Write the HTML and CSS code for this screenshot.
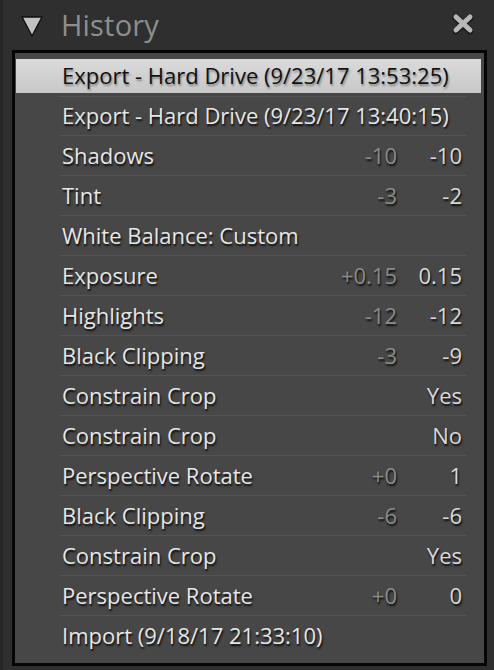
FILE: index.html
```html
<!DOCTYPE html>
<html>
<head>
<meta charset="utf-8">
<link rel="stylesheet" href="styles.css">
</head>
<body>
<div class="panel">
  <div class="header">
    <svg class="tri" width="24" height="24" viewBox="0 0 24 24"><polygon points="2,3 22,3 12,22" fill="#c2c2c2" stroke="#111" stroke-width="1.5" stroke-linejoin="round"/></svg>
    <span class="title">History</span>
    <svg class="close" width="26" height="24" viewBox="0 0 26 24"><g stroke="#111" stroke-width="7" stroke-linecap="round" opacity="0.6"><line x1="6" y1="6" x2="20" y2="19"/><line x1="20" y1="6" x2="6" y2="19"/></g><g stroke="#b8b8b8" stroke-width="5" stroke-linecap="round"><line x1="6" y1="5" x2="20" y2="18"/><line x1="20" y1="5" x2="6" y2="18"/></g></svg>
  </div>
  <div class="list">
    <div class="row selected"><div class="inner"><span class="name">Export - Hard Drive (9/23/17 13:53:25)</span></div></div>
    <div class="row"><div class="inner"><span class="name">Export - Hard Drive (9/23/17 13:40:15)</span></div></div>
    <div class="row"><div class="inner"><span class="name">Shadows</span><span class="v1">-10</span><span class="v2">-10</span></div></div>
    <div class="row"><div class="inner"><span class="name">Tint</span><span class="v1">-3</span><span class="v2">-2</span></div></div>
    <div class="row"><div class="inner"><span class="name">White Balance: Custom</span></div></div>
    <div class="row"><div class="inner"><span class="name">Exposure</span><span class="v1">+0.15</span><span class="v2">0.15</span></div></div>
    <div class="row"><div class="inner"><span class="name">Highlights</span><span class="v1">-12</span><span class="v2">-12</span></div></div>
    <div class="row"><div class="inner"><span class="name">Black Clipping</span><span class="v1">-3</span><span class="v2">-9</span></div></div>
    <div class="row"><div class="inner"><span class="name">Constrain Crop</span><span class="v1"></span><span class="v2">Yes</span></div></div>
    <div class="row"><div class="inner"><span class="name">Constrain Crop</span><span class="v1"></span><span class="v2">No</span></div></div>
    <div class="row"><div class="inner"><span class="name">Perspective Rotate</span><span class="v1">+0</span><span class="v2">1</span></div></div>
    <div class="row"><div class="inner"><span class="name">Black Clipping</span><span class="v1">-6</span><span class="v2">-6</span></div></div>
    <div class="row"><div class="inner"><span class="name">Constrain Crop</span><span class="v1"></span><span class="v2">Yes</span></div></div>
    <div class="row"><div class="inner"><span class="name">Perspective Rotate</span><span class="v1">+0</span><span class="v2">0</span></div></div>
    <div class="row last"><div class="inner"><span class="name">Import (9/18/17 21:33:10)</span></div></div>
  </div>
</div>
</body>
</html>
```
FILE: styles.css
```css
html, body {
  margin: 0;
  padding: 0;
  background: #2f2f2f;
}
body {
  width: 494px;
  height: 670px;
  overflow: hidden;
  font-family: "Open Sans", "Liberation Sans", sans-serif;
}
.panel {
  border-left: 3px solid #262626;
  height: 670px;
  box-sizing: border-box;
  padding: 0 7px 0 9px;
}
.header {
  height: 50px;
  display: flex;
  align-items: center;
}
.tri {
  margin-left: 8px;
  margin-top: 2px;
}
.title {
  margin-left: 17px;
  font-size: 29px;
  color: #8e8e8e;
  letter-spacing: 0.2px;
  margin-top: -2px;
}
.close {
  margin-left: auto;
  margin-right: 11px;
  margin-top: -3px;
}
.list {
  border: 3px solid #050505;
  background: #474747;
  height: 616px;
  box-sizing: border-box;
  padding-top: 3px;
}
.row {
  height: 40px;
  box-sizing: border-box;
  padding-left: 45px;
  padding-right: 18px;
}
.inner {
  height: 40px;
  box-sizing: border-box;
  border-bottom: 1px solid #545454;
  display: flex;
  align-items: center;
  padding-left: 2px;
  padding-right: 4px;
  padding-bottom: 2px;
  font-size: 22px;
  color: #e6e6e6;
  text-shadow: 1px 2px 2px rgba(0,0,0,0.85);
}
.row.last .inner {
  border-bottom: none;
}
.row.selected {
  background: linear-gradient(#dcdcdc, #c6c6c6);
  background-clip: content-box;
  padding: 3px 3px 3px 1px;
  position: relative;
}
.row.selected .inner {
  height: 34px;
  border-bottom: none;
  padding-left: 46px;
  color: #111;
  text-shadow: 1px 2px 2px rgba(0,0,0,0.35);
}
.row.selected::after {
  content: "";
  position: absolute;
  left: 44px;
  right: 18px;
  bottom: -1px;
  height: 1px;
  background: #545454;
}
.name {
  flex: 1;
  white-space: nowrap;
}
.v1 {
  width: 60px;
  text-align: right;
  color: #8a8a8a;
}
.v2 {
  width: 65px;
  text-align: right;
  color: #d8d8d8;
}
```
